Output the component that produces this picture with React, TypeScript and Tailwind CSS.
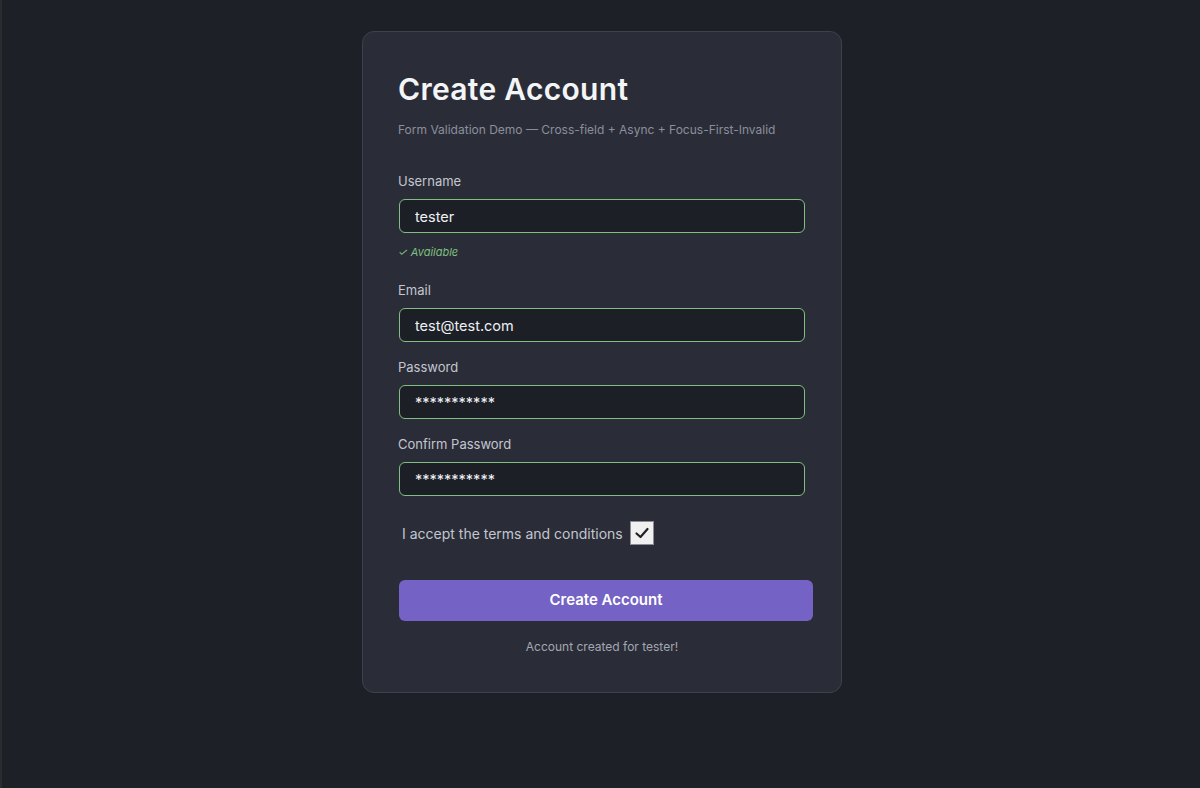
import { useState } from "react";

function Field({
  label,
  value,
  type = "text",
  hint,
}: {
  label: string;
  value: string;
  type?: string;
  hint?: string;
}) {
  return (
    <div className="flex flex-col">
      <label className="text-[13px] text-[#c3c6cf] leading-[18px] mb-[9px]">{label}</label>
      <input
        type={type}
        defaultValue={value}
        className="ml-[1px] w-[406px] h-[34px] rounded-[6px] border border-[#7fbf7f] bg-[#1c1f26] px-[15px] text-[14.5px] text-[#eef0f4] outline-none"
      />
      {hint && (
        <span className="mt-[12px] text-[11px] italic text-[#7fbf7f] leading-[14px]">
          ✓ Available
        </span>
      )}
    </div>
  );
}

export default function App() {
  const [accepted, setAccepted] = useState(true);

  return (
    <div
      className="w-full min-h-[788px] bg-[#1e2028] border-l-2 border-[#2a2c30] flex justify-center pt-[31px] pl-[2px]"
      style={{ fontFamily: "Inter, 'Noto Sans', sans-serif" }}
    >
      <div className="w-[480px] h-[662px] rounded-[12px] border border-[#3d414d] bg-[#2a2d38] px-[35px] pt-[39px] flex flex-col">
        <h1 className="text-[30px] font-semibold text-[#f4f5f7] leading-[36px] tracking-[0.3px]">
          Create Account
        </h1>
        <p className="mt-[15px] text-[12px] text-[#8b8f9b] leading-[16px]">
          Form Validation Demo — Cross-field + Async + Focus-First-Invalid
        </p>

        <div className="mt-[34px] flex flex-col">
          <Field label="Username" value="tester" hint="ok" />
          <div className="mt-[22px] flex flex-col gap-[16px]">
            <Field label="Email" value="test@test.com" />
            <Field label="Password" value="***********" />
            <Field label="Confirm Password" value="***********" />
          </div>
        </div>

        <div className="mt-[25px] flex items-center pl-[4px] gap-[7px]">
          <span className="text-[14px] text-[#c3c6cf]">I accept the terms and conditions</span>
          <button
            type="button"
            onClick={() => setAccepted(!accepted)}
            className="w-[24px] h-[24px] border border-[#8a8d94] bg-[#f0f0f0] flex items-center justify-center"
          >
            {accepted && (
              <svg width="16" height="16" viewBox="0 0 16 16" fill="none">
                <path d="M2.5 8.5 L6.5 12 L13.5 4" stroke="#222" strokeWidth="2.2" strokeLinecap="round" strokeLinejoin="round" />
              </svg>
            )}
          </button>
        </div>

        <button
          type="button"
          className="mt-[35px] ml-[1px] w-[414px] h-[41px] rounded-[6px] bg-[#7462c4] text-[15px] font-semibold text-white"
        >
          Create Account
        </button>

        <p className="mt-[18px] text-center text-[12px] text-[#a3a7b2] leading-[16px]">
          Account created for tester!
        </p>
      </div>
    </div>
  );
}
